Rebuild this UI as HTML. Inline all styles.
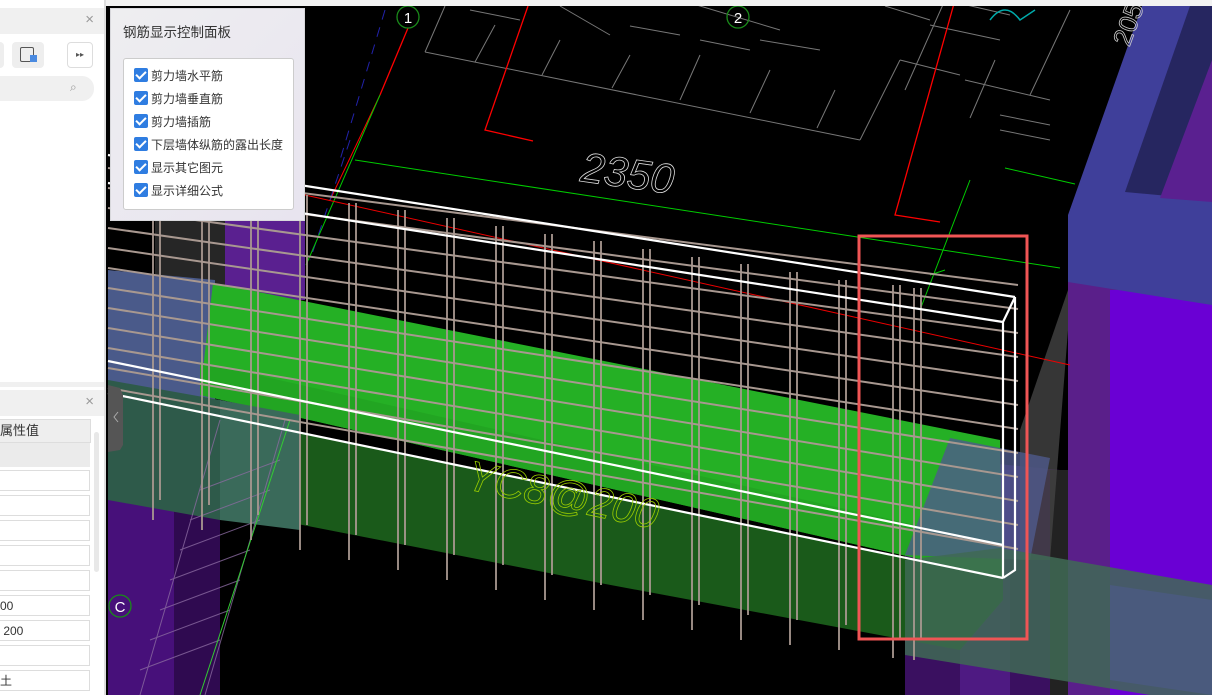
<!DOCTYPE html>
<html><head><meta charset="utf-8"><style>
*{margin:0;padding:0;box-sizing:border-box}
body{width:1212px;height:695px;overflow:hidden;background:#000;font-family:"Liberation Sans","Noto Sans CJK SC",sans-serif;position:relative}
svg{position:absolute;left:0;top:0}
.lp{position:absolute;left:0;top:0;width:106px;height:695px;background:#fff;border-right:2px solid #ddd}
.hdr{position:absolute;left:0;width:104px;height:26px;background:#f0f0f0}
.x{position:absolute;right:10px;font-size:15px;color:#999}
.inp{position:absolute;left:0;width:90px;height:21px;border:1px solid #ddd;border-left:none;background:#fff;font-size:12px;line-height:20px;color:#333}
.cp{position:absolute;left:110px;top:8px;width:195px;height:213px;background:linear-gradient(135deg,#eeeef0,#e8e4ef);border:1px solid #d8d8dc}
.cp .t{position:absolute;left:12px;top:12px;font-size:13.5px;color:#333}
.box{position:absolute;left:12px;top:49px;width:171px;height:152px;background:#fff;border:1px solid #ccc;border-radius:3px}
.row{position:absolute;left:10px;height:16px;font-size:12px;color:#333;line-height:16px;white-space:nowrap}
.cb{display:inline-block;width:14px;height:14px;background:#2f7de1;border-radius:2px;vertical-align:-2px;margin-right:3px;position:relative}
.cb:after{content:"";position:absolute;left:4px;top:1px;width:4px;height:8px;border:solid #fff;border-width:0 2px 2px 0;transform:rotate(45deg)}
</style></head><body>
<svg width="1212" height="695" viewBox="0 0 1212 695">
<polygon points="155,200 225,200 225,290 155,280" fill="#262626"/>
<polygon points="225,200 305,200 305,300 225,300" fill="#5a2090"/>
<polygon points="108,270 215,280 215,420 108,410" fill="#4a5a8a"/>
<rect x="108" y="500" width="66" height="195" fill="#47107a"/>
<rect x="174" y="505" width="46" height="190" fill="#2f0a50"/>
<!-- right structure -->
<rect x="1068" y="280" width="144" height="415" fill="#5a1f8a"/>
<rect x="1110" y="290" width="102" height="405" fill="#6a00d4"/>
<polygon points="905,455 1060,470 1060,695 905,695" fill="#3a1060"/>
<rect x="960" y="470" width="50" height="225" fill="#4e1a82"/>
<rect x="1050" y="470" width="18" height="225" fill="#222"/>
<polygon points="1068,215 1142,6 1212,6 1212,305 1068,282" fill="#3f3f9a"/>
<polygon points="1125,192 1190,6 1212,6 1212,200" fill="#262660"/>
<polygon points="1160,198 1212,60 1212,202" fill="#5a2090"/>
<polygon points="1068,290 1020,430 1020,560 1050,560 1068,330" fill="#444" opacity=".8"/>
<g stroke="#777" stroke-width="1" fill="none">
<path d="M425,52 L860,140 M470,10 L520,20 M560,6 L610,35 M630,26 L680,35 M700,40 L750,50 M780,30 L680,0 M820,50 L760,40 M885,6 L930,20 M900,60 L960,75 M930,25 L1000,40 M945,0 L1010,15 M965,80 L1050,100 M1000,115 L1050,125 M1050,140 L1000,130"/>
<path d="M425,52 L445,6 M475,62 L495,25 M542,75 L560,40 M612,88 L630,55 M680,100 L700,55 M750,113 L770,70 M817,128 L835,90 M860,140 L900,60 M970,118 L995,60 M945,0 L905,90 M1030,95 L1070,10"/>
</g>
<path d="M408,28 L380,95 M528,6 L485,130 L533,141" stroke="#f00" stroke-width="1.3" fill="none"/>
<path d="M955,0 L895,215 L940,222" stroke="#f00" stroke-width="1.3" fill="none"/>
<path d="M380,95 L330,200" stroke="#f00" stroke-width="1" fill="none"/>
<path d="M385,10 L340,160 M350,140 L310,260" stroke="#22a" stroke-width="1" stroke-dasharray="10,8" fill="none"/>
<path d="M355,160 L1060,268" stroke="#0c0" stroke-width="1"/>
<path d="M1005,168 L1075,184 M970,180 L920,310 M930,275 L945,270" stroke="#0c0" stroke-width="1"/>
<path d="M380,95 L306,265" stroke="#0c0" stroke-width="1"/>
<path d="M305,195 L1070,365" stroke="#e00" stroke-width="1"/>
<text x="580" y="188" font-family="Liberation Sans" font-size="42" fill="none" stroke="#ddd" stroke-width=".8" transform="rotate(8 630 180)" font-style="italic">2350</text>
<path d="M990,20 Q1005,0 1020,20 L1035,10" stroke="#0aa" stroke-width="1.5" fill="none"/>
<text x="1110" y="40" fill="none" stroke="#ccc" stroke-width=".8" font-size="26" transform="rotate(-70 1125 30)">205</text>
<!-- green slab -->
<polygon points="213,283 1000,440 1003,578 200,395" fill="#25b025"/>
<polygon points="200,395 1003,578 1003,545 200,362" fill="#22a522"/>
<polygon points="108,393 1003,578 1003,600 960,650 600,583 108,487" fill="#1a5a1a"/>
<polygon points="108,380 220,400 220,520 108,500" fill="#2e5a4a"/>
<polygon points="220,400 300,415 300,530 220,520" fill="#3a6a5a"/>
<polygon points="950,438 1050,458 1030,560 905,555" fill="#4f5a8c" opacity=".8"/>
<polygon points="1000,548 1212,585 1212,695 1150,695 905,655 905,560" fill="#3f6a55" opacity=".85"/>
<polygon points="1110,585 1212,600 1212,695 1110,680" fill="#4a5a80" opacity=".9"/>
<g stroke="#8a6aa0" stroke-width="1" fill="none" opacity=".8">
<path d="M220,420 L140,695 M285,420 L205,695"/>
<path d="M200,490 L280,460 M190,520 L270,490 M180,550 L260,520 M170,580 L250,550 M160,610 L240,580 M150,640 L230,610 M140,670 L220,640"/>
</g>
<path d="M290,420 L200,695" stroke="#3c3" stroke-width="1"/>
<g stroke="#a89890" stroke-width="2" fill="none">
<path d="M108,168L1018,285M108,188L1018,309M108,208L1018,333M108,228L1018,357M108,248L1018,381M108,268L1018,405M108,288L1018,429M108,308L1018,453M108,328L1018,477M108,348L1018,501M108,368L1018,525M108,388L1018,549"/>
</g>
<g stroke="#a89890" stroke-width="2" fill="none" opacity=".9">
<path d="M153,172V520M160,172V500M202,180V530M209,180V505M251,187V540M258,187V515M300,195V550M307,195V525M349,203V560M356,203V535M398,210V570M405,210V545M447,218V580M454,218V555M496,226V590M503,226V565M545,234V600M552,234V575M594,241V610M601,241V585M643,249V620M650,249V595M692,257V630M699,257V605M741,264V640M748,264V615M790,272V645M797,272V620M839,280V650M846,280V625M893,285V658M900,285V640M914,288V660M921,288V640"/>
</g>
<g stroke="#fff" stroke-width="2.2" fill="none">
<path d="M108,155L1015,297M108,183L1003,322M1003,322V578M1015,297V570L1003,578M1003,322L1015,297M108,361L1003,545M108,393L1003,578"/>
</g>
<text x="460" y="505" font-size="42" fill="none" stroke="#9c0" stroke-width=".8" transform="rotate(12 540 520)" font-style="italic">YC8@200</text>
<g stroke="#1a8a1a" stroke-width="1.3" fill="none"><circle cx="408" cy="17" r="11"/><circle cx="738" cy="17" r="11"/><circle cx="120" cy="606" r="11"/></g>
<g fill="#fff" font-size="15" text-anchor="middle"><text x="408" y="23">1</text><text x="738" y="23">2</text><text x="120" y="612">C</text></g>
<rect x="859" y="236" width="168" height="403" fill="none" stroke="#f05555" stroke-width="3"/>
<path d="M108,385 L120,388 L123,395 V445 L120,450 L108,452Z" fill="#555"/>
<path d="M118,412 L114,417 L118,422" stroke="#aaa" fill="none"/>
<rect x="0" y="0" width="1212" height="6" fill="#f2f2f2"/>
</svg>
<div class="lp">
 <div class="hdr" style="top:8px"><span class="x" style="top:3px">×</span></div>
 <div style="position:absolute;left:0;top:42px;width:4px;height:26px;background:#eee;border-radius:0 4px 4px 0"></div>
 <div style="position:absolute;left:12px;top:42px;width:32px;height:26px;background:#eee;border-radius:4px"><div style="position:absolute;left:8px;top:5px;width:14px;height:15px;border:1.5px solid #555;border-radius:2px"></div><div style="position:absolute;left:18px;top:13px;width:7px;height:7px;background:#4a8ae0"></div></div>
 <div style="position:absolute;left:67px;top:42px;width:26px;height:26px;border:1px solid #ddd;border-radius:4px;font-size:8px;text-align:center;line-height:24px;color:#555">▸▸</div>
 <div style="position:absolute;left:0;top:76px;width:94px;height:25px;background:#f0f0f0;border-radius:0 12px 12px 0"><span style="position:absolute;left:70px;top:4px;font-size:12px;color:#999">⌕</span></div>
 <div style="position:absolute;left:0;top:382px;width:104px;height:5px;background:#f0f0f0"></div>
 <div class="hdr" style="top:390px"><span class="x" style="top:3px">×</span></div>
 <div style="position:absolute;left:0;top:419px;width:91px;height:24px;background:#eee;border:1px solid #ddd;border-left:none;font-size:13px;line-height:22px;color:#333">属性值</div>
 <div style="position:absolute;left:0;top:443px;width:90px;height:24px;background:#ebebeb"></div>
 <div style="position:absolute;left:94px;top:432px;width:5px;height:140px;background:#e8e8e8;border-radius:3px"></div>
 <div class="inp" style="top:470px"></div>
 <div class="inp" style="top:495px"></div>
 <div class="inp" style="top:520px"></div>
 <div class="inp" style="top:545px"></div>
 <div class="inp" style="top:570px"></div>
 <div class="inp" style="top:595px">00</div>
 <div class="inp" style="top:620px">&nbsp;200</div>
 <div class="inp" style="top:645px"></div>
 <div class="inp" style="top:670px">土</div>
</div>
<div class="cp">
 <div class="t">钢筋显示控制面板</div>
 <div class="box">
  <div class="row" style="top:9px"><span class="cb"></span>剪力墙水平筋</div>
  <div class="row" style="top:32px"><span class="cb"></span>剪力墙垂直筋</div>
  <div class="row" style="top:55px"><span class="cb"></span>剪力墙插筋</div>
  <div class="row" style="top:78px"><span class="cb"></span>下层墙体纵筋的露出长度</div>
  <div class="row" style="top:101px"><span class="cb"></span>显示其它图元</div>
  <div class="row" style="top:124px"><span class="cb"></span>显示详细公式</div>
 </div>
</div>
</body></html>
